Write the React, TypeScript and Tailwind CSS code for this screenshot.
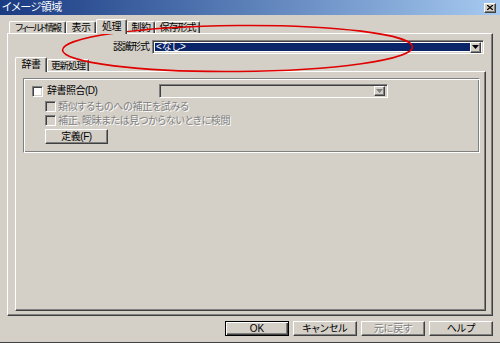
import React from "react";

const raised =
  "bg-[#d4d0c8] border border-t-white border-l-white border-r-[#404040] border-b-[#404040] shadow-[inset_-1px_-1px_0_#808080]";
const sunken =
  "border border-t-[#808080] border-l-[#808080] border-r-white border-b-white shadow-[inset_1px_1px_0_#404040,inset_-1px_-1px_0_#d4d0c8]";
const grayText = "text-[#808080] [text-shadow:1px_1px_0_#ffffff]";

interface TabProps {
  label: string;
  active?: boolean;
  className: string;
}

const Tab = ({ label, active, className }: TabProps) => (
  <div
    className={
      "flex shrink-0 items-center justify-center whitespace-nowrap rounded-t-[2px] border-t border-l border-r border-t-white border-l-white border-r-[#404040] bg-[#d4d0c8] shadow-[inset_-1px_0_0_#808080] leading-none " +
      (active ? "relative top-[1px] z-10 h-[15px] pb-[1px] " : "h-[12px] ") +
      className
    }
  >
    {label}
  </div>
);

const Checkbox = ({ disabled }: { disabled?: boolean }) => (
  <div
    className={
      "h-[11px] w-[11px] shrink-0 " +
      sunken +
      (disabled ? " bg-[#d4d0c8]" : " bg-white")
    }
  />
);

const Arrow = ({ color }: { color: string }) => (
  <svg width="7" height="4" viewBox="0 0 7 4">
    <path d="M0 0h7L3.5 4z" fill={color} />
  </svg>
);

const DialogButton = ({
  label,
  isDefault,
  disabled,
}: {
  label: string;
  isDefault?: boolean;
  disabled?: boolean;
}) => (
  <div
    className={
      "flex h-[15px] w-[64px] items-center justify-center text-[10px] leading-none " +
      (isDefault
        ? "border border-black bg-[#d4d0c8] shadow-[inset_1px_1px_0_#ffffff,inset_-1px_-1px_0_#404040,inset_-2px_-2px_0_#808080]"
        : raised) +
      (disabled ? " " + grayText : " text-black")
    }
  >
    <span>{label}</span>
  </div>
);

export default function App() {
  return (
    <div className="relative h-[343px] w-[500px] overflow-hidden border-b border-[#404040] bg-[#d4d0c8] font-['Liberation_Sans','Noto_Sans_CJK_JP',sans-serif] text-black [font-feature-settings:'palt']">
      {/* title bar */}
      <div className="flex h-[15px] items-center justify-between bg-gradient-to-r from-[#1a3a82] to-[#a6caf0] pl-[2px] pr-[4px]">
        <span className="text-[11px] leading-none tracking-[-0.5px] text-white">イメージ領域</span>
        <div className={"flex h-[10px] w-[12px] items-center justify-center " + raised}>
          <svg width="6" height="5" viewBox="0 0 6 5">
            <path d="M0 0L6 5M6 0L0 5" stroke="#000" strokeWidth="1.3" />
          </svg>
        </div>
      </div>

      <div className="px-[7px] pt-[4px]">
        {/* main tabs */}
        <div className="flex h-[14px] items-end pl-[2px] text-[10px]">
          <Tab label="フィールド情報" className="w-[57px] text-[9.5px] tracking-[-2.2px]" />
          <Tab label="表示" className="w-[30px] tracking-[-0.5px]" />
          <Tab label="処理" active className="w-[31px] tracking-[-0.5px]" />
          <Tab label="制約" className="w-[28px] tracking-[-0.5px]" />
          <Tab label="保存形式" className="w-[45px] tracking-[-1px]" />
        </div>

        {/* main panel */}
        <div className={"flex h-[283px] flex-col pt-[6px] " + raised}>
          <div className="flex items-center justify-end gap-[3px] pr-[8px]">
            <span className="text-[10px] leading-none tracking-[-1px]">認識形式</span>
            <div className={"flex h-[14px] w-[332px] items-center bg-white p-[2px] " + sunken}>
              <div className="flex h-full flex-1 items-center bg-[#0a246a] pl-[1px] text-[10px] leading-none text-white">
                &lt;なし&gt;
              </div>
              <div className={"flex h-[11px] w-[11px] items-center justify-center " + raised}>
                <Arrow color="#000" />
              </div>
            </div>
          </div>

          {/* sub tabs */}
          <div className="ml-[7px] mt-[3px] flex h-[14px] items-end text-[10px]">
            <Tab label="辞書" active className="w-[32px] tracking-[-0.5px]" />
            <Tab label="更新処理" className="w-[42px] text-[9.5px] tracking-[-1px]" />
          </div>
          <div className={"mb-[4px] ml-[7px] mr-[6px] flex-1 pl-[7px] pr-[5px] pt-[6px] " + raised}>
            {/* group box */}
            <div className="h-[75px] border border-t-[#808080] border-l-[#808080] border-r-white border-b-white shadow-[inset_1px_1px_0_#ffffff,inset_-1px_-1px_0_#808080] pl-[8px] pt-[5px] text-[10px] leading-none">
              <div className="flex h-[14px] items-center">
                <Checkbox />
                <span className="ml-[4px] w-[112px] tracking-[-0.5px]">辞書照合(D)</span>
                <div className={"flex h-[14px] w-[229px] items-center justify-end bg-[#d4d0c8] p-[2px] " + sunken}>
                  <div className={"flex h-[10px] w-[11px] items-center justify-center " + raised}>
                    <Arrow color="#808080" />
                  </div>
                </div>
              </div>
              <div className="ml-[13px] mt-[2px] flex h-[13px] items-center">
                <Checkbox disabled />
                <span className={"ml-[2px] tracking-[-0.3px] " + grayText}>類似するものへの補正を試みる</span>
              </div>
              <div className="ml-[13px] mt-[1px] flex h-[13px] items-center">
                <Checkbox disabled />
                <span className={"ml-[2px] tracking-[-0.3px] " + grayText}>補正、曖昧または見つからないときに検閲</span>
              </div>
              <div className={"ml-[13px] mt-[2px] flex h-[15px] w-[63px] items-center justify-center " + raised}>
                <span className="tracking-[-0.5px]">定義(F)</span>
              </div>
            </div>
          </div>
        </div>
      </div>

      {/* dialog buttons */}
      <div className="mt-[5px] flex justify-end gap-[4px] pr-[7px]">
        <DialogButton label="OK" isDefault />
        <DialogButton label="キャンセル" />
        <DialogButton label="元に戻す" disabled />
        <DialogButton label="ヘルプ" />
      </div>

      {/* annotation */}
      <svg
        className="pointer-events-none absolute left-0 top-0"
        width="500"
        height="343"
        viewBox="0 0 500 343"
      >
        <ellipse
          cx="237.5"
          cy="48.5"
          rx="175"
          ry="23"
          fill="none"
          stroke="#e00000"
          strokeWidth="1.6"
          transform="rotate(-0.5 237.5 48.5)"
        />
      </svg>
    </div>
  );
}
